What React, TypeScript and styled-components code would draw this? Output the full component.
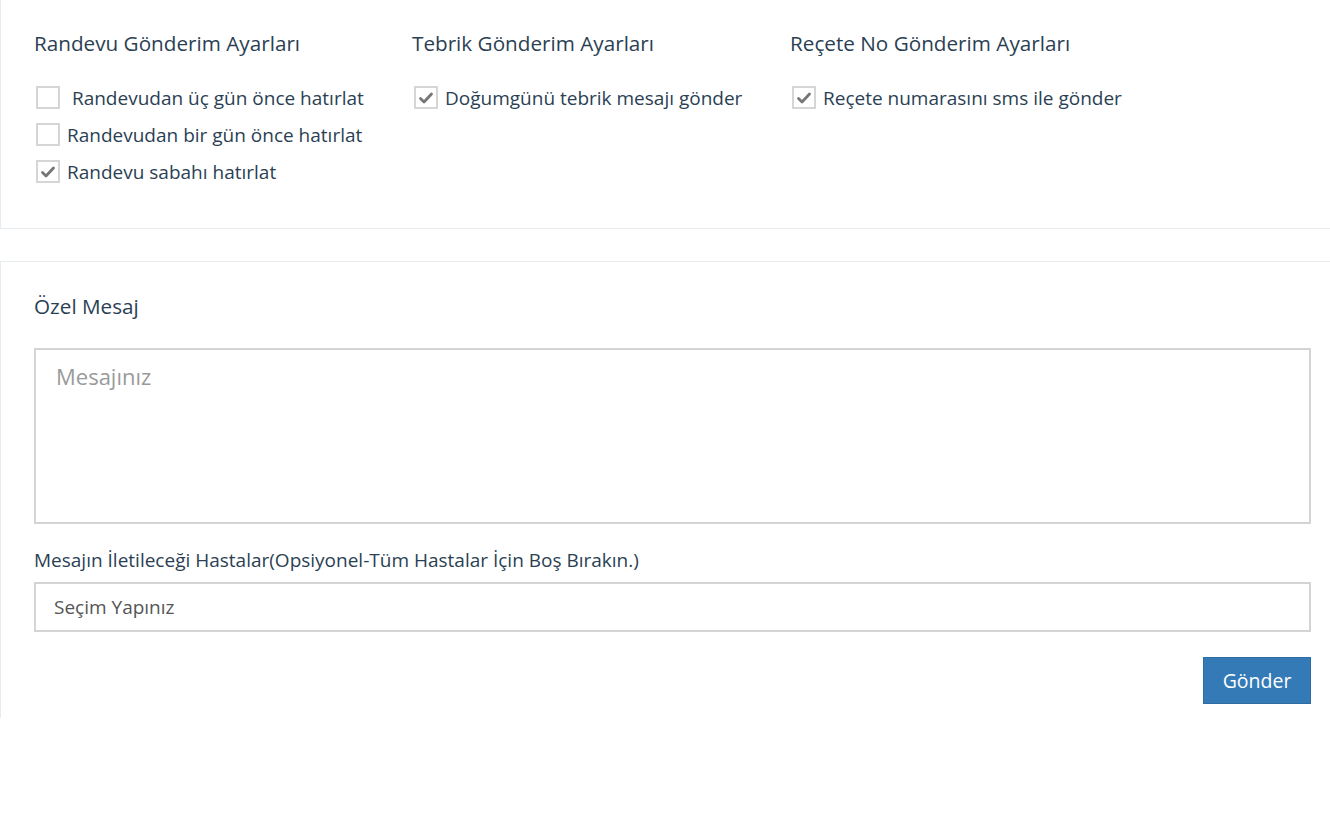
import { createGlobalStyle } from 'styled-components';
import styled from 'styled-components';

const GlobalStyle = createGlobalStyle`
  html, body {
    margin: 0;
    padding: 0;
    background: #fff;
    overflow-x: hidden;
  }
  body {
    font-family: 'Open Sans', 'Noto Sans', sans-serif;
    color: #2b3f54;
  }
`;

const groups = [
  {
    title: 'Randevu Gönderim Ayarları',
    items: [
      { label: '\u00a0Randevudan üç gün önce hatırlat', checked: false },
      { label: 'Randevudan bir gün önce hatırlat', checked: false },
      { label: 'Randevu sabahı hatırlat', checked: true },
    ],
  },
  {
    title: 'Tebrik Gönderim Ayarları',
    items: [{ label: 'Doğumgünü tebrik mesajı gönder', checked: true }],
  },
  {
    title: 'Reçete No Gönderim Ayarları',
    items: [{ label: 'Reçete numarasını sms ile gönder', checked: true }],
  },
];

function CheckBox({ checked }: { checked: boolean }) {
  return (
    <StyledBox>
      {checked && (
        <svg width="16" height="14" viewBox="0 0 16 14">
          <polyline
            points="2.5,7.5 6,11 13.5,3"
            fill="none"
            stroke="#767676"
            strokeWidth="2.8"
            strokeLinecap="round"
            strokeLinejoin="round"
          />
        </svg>
      )}
    </StyledBox>
  );
}

function App() {
  return (
    <>
      <GlobalStyle />
      <SettingsPanel>
        {groups.map((group) => (
          <Column key={group.title}>
            <Heading>{group.title}</Heading>
            <CheckList>
              {group.items.map((item) => (
                <CheckRow key={item.label}>
                  <CheckBox checked={item.checked} />
                  <span>{item.label}</span>
                </CheckRow>
              ))}
            </CheckList>
          </Column>
        ))}
      </SettingsPanel>

      <MessagePanel>
        <Heading>Özel Mesaj</Heading>
        <MessageArea placeholder="Mesajınız" />
        <FieldLabel>
          Mesajın İletileceği Hastalar(Opsiyonel-Tüm Hastalar İçin Boş Bırakın.)
        </FieldLabel>
        <SelectBox>Seçim Yapınız</SelectBox>
        <Actions>
          <SendButton type="button">Gönder</SendButton>
        </Actions>
      </MessagePanel>
    </>
  );
}

export default App;

const Panel = styled.div`
  box-sizing: border-box;
  width: 1330px;
  border-left: 1px solid #e7ecf1;
  padding-left: 33px;
  padding-right: 19px;
`;

const SettingsPanel = styled(Panel)`
  display: grid;
  grid-template-columns: 378px 378px 1fr;
  height: 229px;
  padding-top: 31px;
  border-bottom: 1px solid #e7ecf1;
`;

const Column = styled.div`
  display: flex;
  flex-direction: column;
`;

const Heading = styled.div`
  font-size: 20.7px;
  line-height: 24px;
  color: #2b3f54;
`;

const CheckList = styled.div`
  display: flex;
  flex-direction: column;
  margin-top: 24px;
`;

const CheckRow = styled.label`
  display: flex;
  align-items: center;
  gap: 7px;
  height: 37px;
  font-size: 19px;
  color: #2b3f54;
  padding-left: 2px;
`;

const StyledBox = styled.span`
  box-sizing: border-box;
  width: 24px;
  height: 23px;
  border: 2px solid #d6d6d6;
  display: flex;
  align-items: center;
  justify-content: center;
  flex-shrink: 0;
`;

const MessagePanel = styled(Panel)`
  display: flex;
  flex-direction: column;
  margin-top: 32px;
  border-top: 1px solid #e7ecf1;
  padding-top: 32px;
  padding-bottom: 14px;
`;

const MessageArea = styled.textarea`
  box-sizing: border-box;
  margin-top: 30px;
  width: 100%;
  height: 176px;
  resize: none;
  border: 2px solid #d4d4d4;
  padding: 11px 20px;
  font-family: 'Open Sans', sans-serif;
  font-size: 22px;
  color: #333;
  outline: none;

  &::placeholder {
    color: #9a9a9a;
  }
`;

const FieldLabel = styled.div`
  margin-top: 24px;
  font-size: 19px;
  line-height: 24px;
  color: #2b3f54;
`;

const SelectBox = styled.div`
  box-sizing: border-box;
  margin-top: 10px;
  height: 50px;
  border: 2px solid #d4d4d4;
  display: flex;
  align-items: center;
  padding-left: 18px;
  font-size: 19px;
  color: #555;
`;

const Actions = styled.div`
  display: flex;
  justify-content: flex-end;
  margin-top: 25px;
`;

const SendButton = styled.button`
  box-sizing: border-box;
  width: 108px;
  height: 47px;
  background: #337ab7;
  border: 1px solid #2e6da4;
  color: #fff;
  font-family: 'Open Sans', sans-serif;
  font-size: 19.5px;
  cursor: pointer;
`;
